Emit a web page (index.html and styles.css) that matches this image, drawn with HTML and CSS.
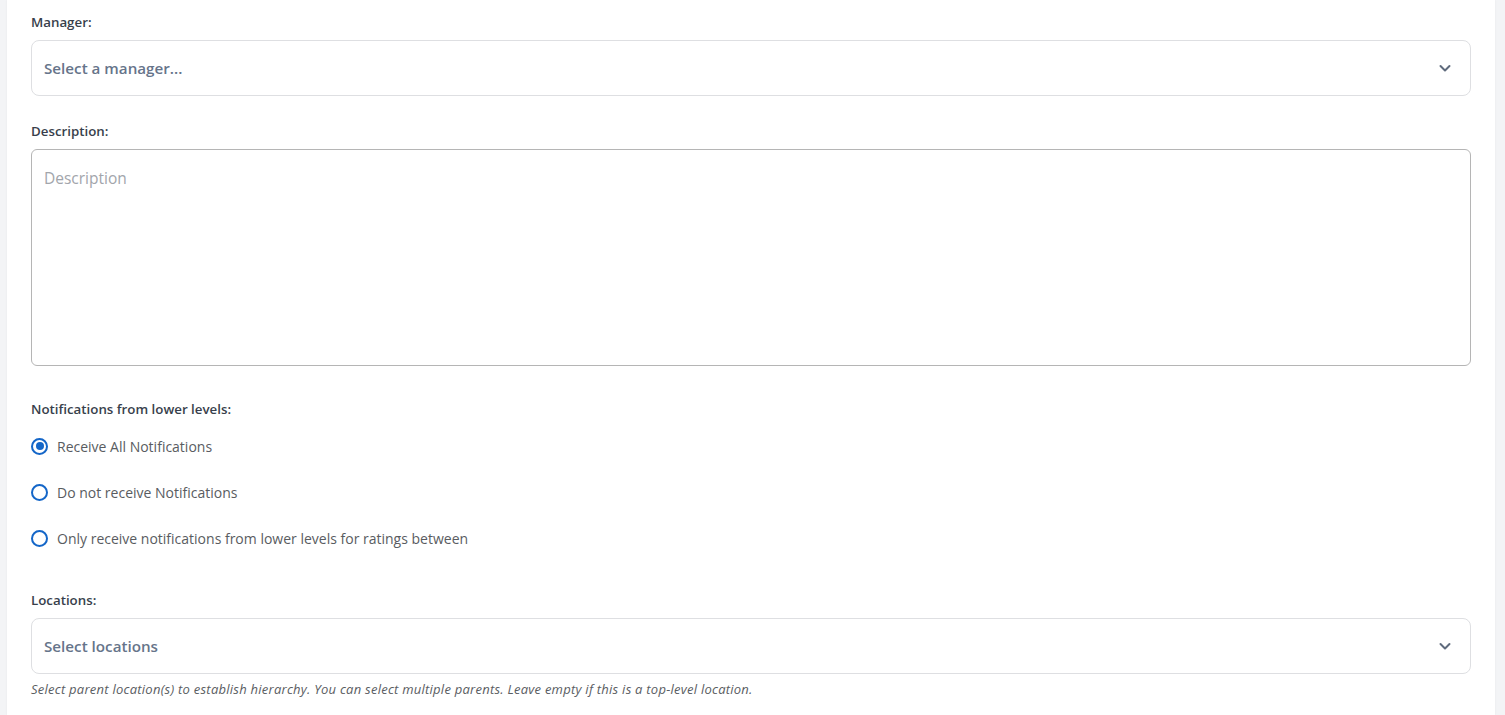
FILE: index.html
```html
<!DOCTYPE html>
<html lang="en">
<head>
<meta charset="utf-8">
<title>Location form</title>
<link rel="stylesheet" href="styles.css">
</head>
<body>
<div class="card">
  <div class="field">
    <label class="label">Manager:</label>
    <div class="select">
      <span class="select-text">Select a manager...</span>
      <svg class="chev" width="14" height="14" viewBox="0 0 14 14"><path d="M2.5 5 L7 9.5 L11.5 5" fill="none" stroke="#5f6b7d" stroke-width="2" stroke-linecap="round" stroke-linejoin="round"/></svg>
    </div>
  </div>
  <div class="field">
    <label class="label">Description:</label>
    <div class="textarea"><span class="placeholder">Description</span></div>
  </div>
  <div class="field notif">
    <label class="label">Notifications from lower levels:</label>
    <div class="radios">
      <div class="radio-row"><span class="radio checked"></span><span class="radio-label">Receive All Notifications</span></div>
      <div class="radio-row"><span class="radio"></span><span class="radio-label">Do not receive Notifications</span></div>
      <div class="radio-row"><span class="radio"></span><span class="radio-label">Only receive notifications from lower levels for ratings between</span></div>
    </div>
  </div>
  <div class="field locations">
    <label class="label">Locations:</label>
    <div class="select">
      <span class="select-text">Select locations</span>
      <svg class="chev" width="14" height="14" viewBox="0 0 14 14"><path d="M2.5 5 L7 9.5 L11.5 5" fill="none" stroke="#5f6b7d" stroke-width="2" stroke-linecap="round" stroke-linejoin="round"/></svg>
    </div>
    <p class="help">Select parent location(s) to establish hierarchy. You can select multiple parents. Leave empty if this is a top-level location.</p>
  </div>
</div>
</body>
</html>
```
FILE: styles.css
```css
* { box-sizing: border-box; }
html, body { margin: 0; padding: 0; }
body {
  background: #f3f4f6;
  font-family: "Open Sans", "Noto Sans", sans-serif;
  height: 715px;
  overflow: hidden;
}
.card {
  margin: 0 10px 0 7px;
  background: #ffffff;
  height: 715px;
  padding: 13px 24px 0 24px;
  display: flex;
  flex-direction: column;
  box-shadow: 0 0 2px rgba(0,0,0,0.06);
}
.field {
  display: flex;
  flex-direction: column;
  gap: 9px;
}
.field + .field { margin-top: 26px; }
.field.notif { margin-top: 34px; gap: 18px; }
.field.locations { margin-top: 43px; }
.label {
  font-size: 13.3px;
  font-weight: 600;
  line-height: 18px;
  color: #383f4c;
}
.select {
  height: 56px;
  border: 1px solid #dedfe2;
  border-radius: 8px;
  display: flex;
  align-items: center;
  justify-content: space-between;
  padding: 0 18px 0 12px;
}
.select-text {
  font-size: 15.2px;
  font-weight: 600;
  color: #66748a;
}
.chev { display: block; }
.textarea {
  height: 217px;
  border: 1px solid #b5b5b5;
  border-radius: 6px;
  padding: 17px 12px;
}
.placeholder {
  font-size: 15.5px;
  color: #a2a5ab;
  line-height: 20px;
}
.radios {
  display: flex;
  flex-direction: column;
  gap: 26px;
}
.radio-row {
  display: flex;
  align-items: center;
  height: 20px;
  gap: 9px;
}
.radio {
  width: 17px;
  height: 17px;
  border: 2px solid #1466c8;
  border-radius: 50%;
  position: relative;
  flex: none;
}
.radio.checked::after {
  content: "";
  position: absolute;
  left: 2.5px;
  top: 2.5px;
  width: 8px;
  height: 8px;
  border-radius: 50%;
  background: #1466c8;
}
.radio-label {
  font-size: 14px;
  color: #595c61;
}
.help {
  margin: -2px 0 0 0;
  font-size: 13px;
  letter-spacing: 0.25px;
  font-style: italic;
  line-height: 16px;
  color: #5a5d62;
}
```
